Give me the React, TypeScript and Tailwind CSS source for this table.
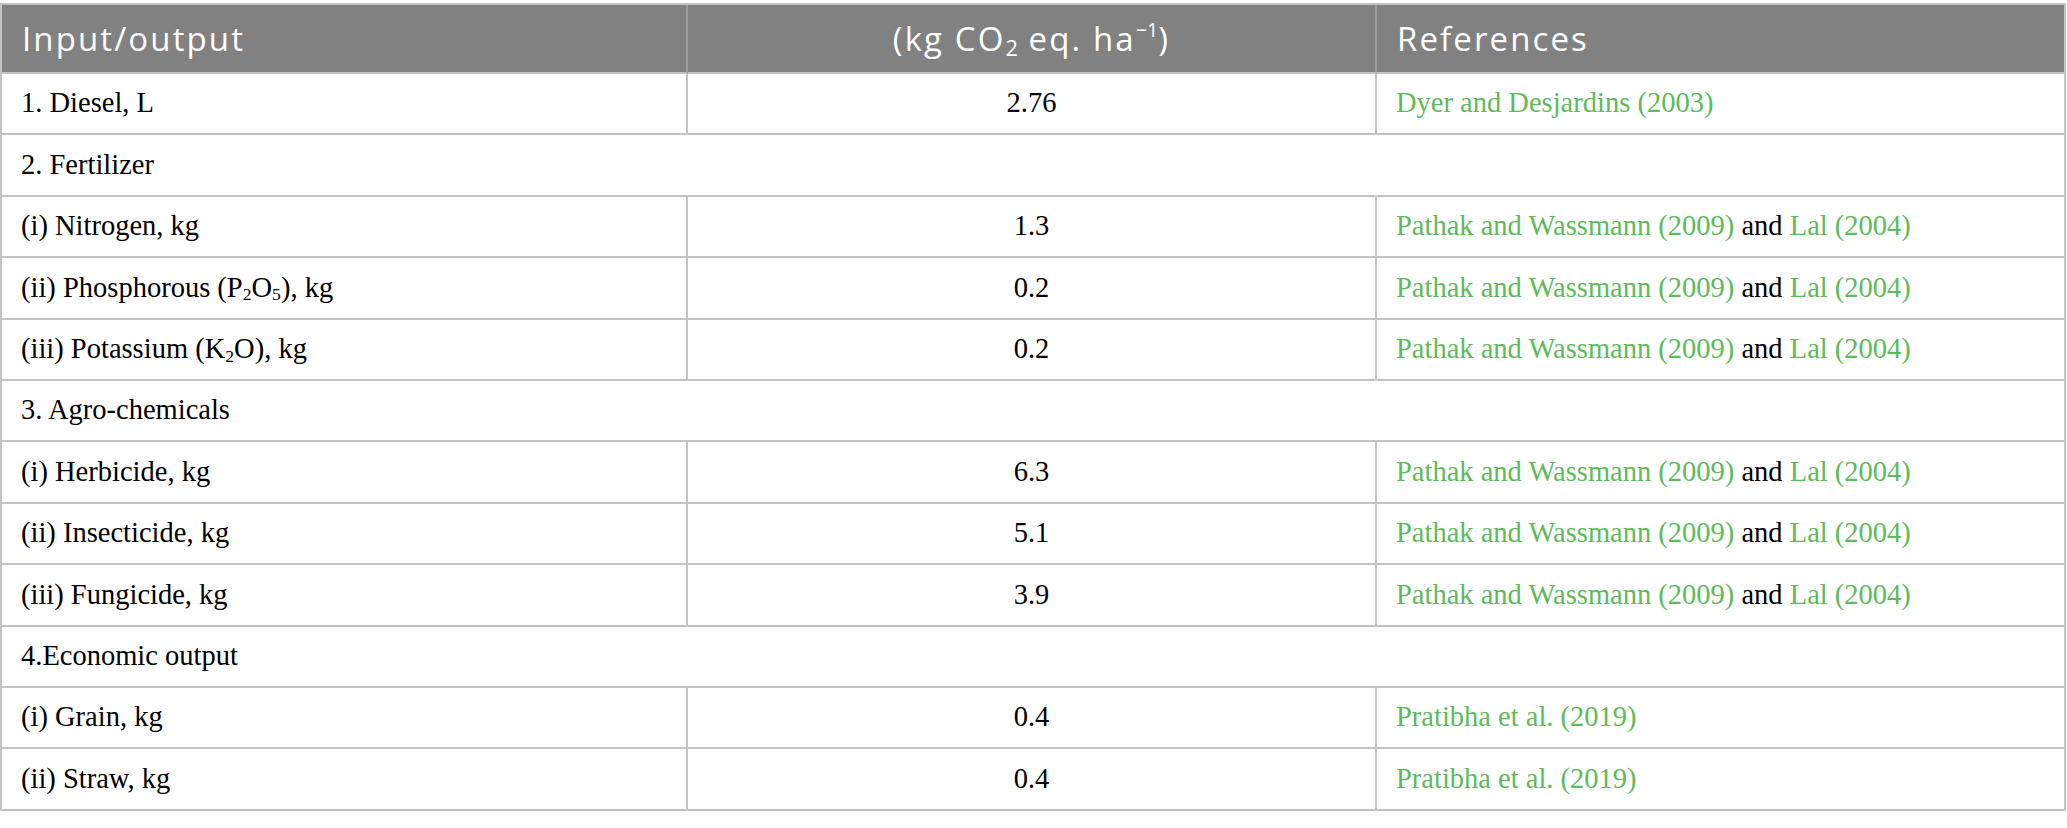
import React from "react";

const G = "text-[#5dbb5a]";

type Row =
  | { kind: "section"; label: React.ReactNode }
  | { kind: "item"; label: React.ReactNode; value: string; ref: React.ReactNode };

const pathak = (
  <>
    <span className={G}>Pathak and Wassmann (2009)</span> and <span className={G}>Lal (2004)</span>
  </>
);
const pratibha = <span className={G}>Pratibha et al. (2019)</span>;

const Sub = ({ children }: { children: React.ReactNode }) => (
  <sub className="text-[62%] bottom-[-0.2em]">{children}</sub>
);

const rows: Row[] = [
  { kind: "item", label: "1. Diesel, L", value: "2.76", ref: <span className={G}>Dyer and Desjardins (2003)</span> },
  { kind: "section", label: "2. Fertilizer" },
  { kind: "item", label: "(i) Nitrogen, kg", value: "1.3", ref: pathak },
  {
    kind: "item",
    label: (
      <>
        (ii) Phosphorous (P<Sub>2</Sub>O<Sub>5</Sub>), kg
      </>
    ),
    value: "0.2",
    ref: pathak,
  },
  {
    kind: "item",
    label: (
      <>
        (iii) Potassium (K<Sub>2</Sub>O), kg
      </>
    ),
    value: "0.2",
    ref: pathak,
  },
  { kind: "section", label: "3. Agro-chemicals" },
  { kind: "item", label: "(i) Herbicide, kg", value: "6.3", ref: pathak },
  { kind: "item", label: "(ii) Insecticide, kg", value: "5.1", ref: pathak },
  { kind: "item", label: "(iii) Fungicide, kg", value: "3.9", ref: pathak },
  { kind: "section", label: "4.Economic output" },
  { kind: "item", label: "(i) Grain, kg", value: "0.4", ref: pratibha },
  { kind: "item", label: "(ii) Straw, kg", value: "0.4", ref: pratibha },
];

const bodyCell =
  "h-[61.4px] border-r-2 border-b-2 border-[#c3c3c3] px-[19px] align-middle p-0 leading-none";

const headCell =
  "h-[69px] border-r-2 border-b-2 border-b-[#c3c3c3] px-[20px] font-normal align-middle leading-none";

export default function App() {
  return (
    <div className="w-[2067px] h-[828px] bg-white pt-[3px]">
      <table
        className="w-[2066px] table-fixed border-separate border-spacing-0 border-t-2 border-l-2 border-[#c3c3c3] text-black"
        style={{ fontFamily: '"Liberation Serif", "Times New Roman", serif' }}
      >
        <colgroup>
          <col className="w-[686px]" />
          <col className="w-[689px]" />
          <col className="w-[689px]" />
        </colgroup>
        <thead>
          <tr
            className="bg-[#808180] text-white text-[33px] tracking-[2.1px]"
            style={{ fontFamily: '"Open Sans", "Noto Sans", sans-serif' }}
          >
            <th className={headCell + " border-r-[#9c9c9c] text-left"}>Input/output</th>
            <th className={headCell + " border-r-[#9c9c9c] text-center"}>
              (kg CO<sub className="text-[66%] tracking-normal">2</sub> eq. ha
              <sup className="text-[60%] tracking-normal top-[-0.7em]">−1</sup>)
            </th>
            <th className={headCell + " border-r-[#c3c3c3] text-left"}>References</th>
          </tr>
        </thead>
        <tbody className="text-[28.5px]">
          {rows.map((r, i) =>
            r.kind === "section" ? (
              <tr key={i}>
                <td colSpan={3} className={bodyCell + " text-left"}>
                  {r.label}
                </td>
              </tr>
            ) : (
              <tr key={i}>
                <td className={bodyCell + " text-left"}>{r.label}</td>
                <td className={bodyCell + " text-center"}>{r.value}</td>
                <td className={bodyCell + " text-left"}>{r.ref}</td>
              </tr>
            )
          )}
        </tbody>
      </table>
    </div>
  );
}
